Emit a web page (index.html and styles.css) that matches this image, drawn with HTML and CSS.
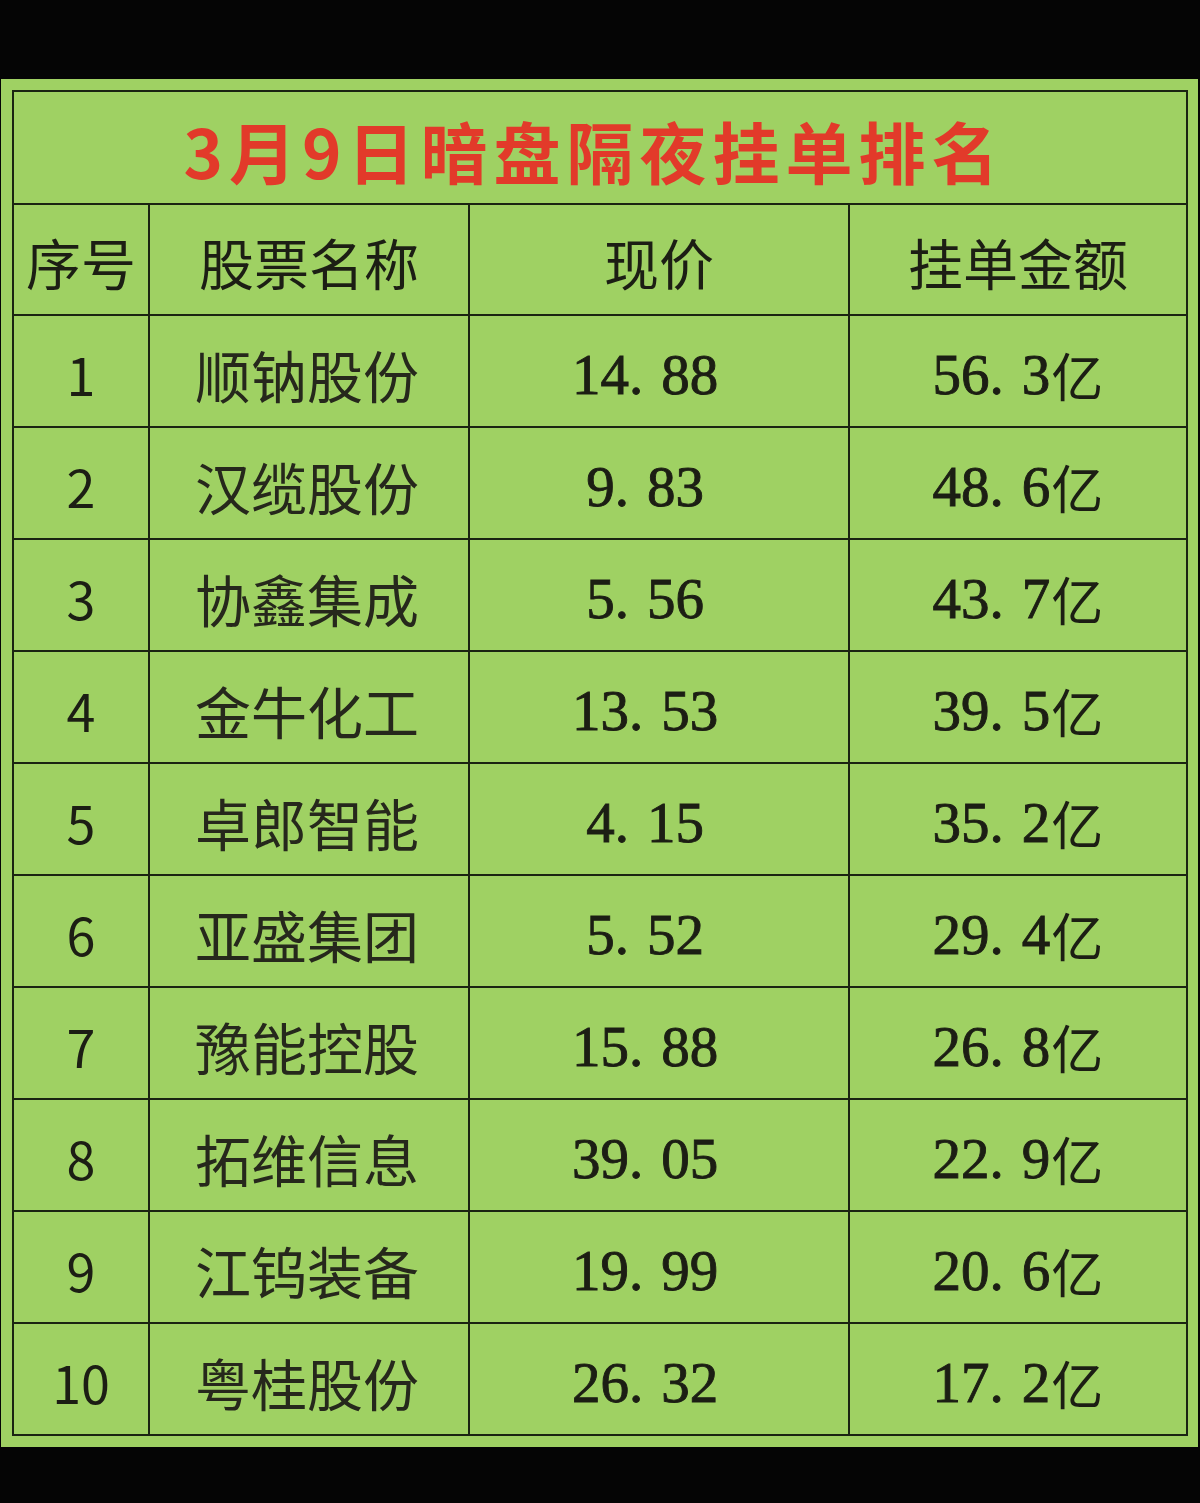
FILE: index.html
```html
<!DOCTYPE html>
<html lang="zh-CN">
<head>
<meta charset="utf-8">
<title>3月9日暗盘隔夜挂单排名</title>
<link rel="stylesheet" href="styles.css">
</head>
<body>
<div class="sheet">
  <div class="grid">
    <div class="title">3月9日暗盘隔夜挂单排名</div>
    <div class="head">序号</div>
    <div class="head">股票名称</div>
    <div class="head">现价</div>
    <div class="head">挂单金额</div>

    <div class="no">1</div><div class="name">顺钠股份</div><div class="num price">14<span class="dot">.</span>88</div><div class="num amt">56<span class="dot">.</span>3<span class="yi">亿</span></div>
    <div class="no">2</div><div class="name">汉缆股份</div><div class="num price">9<span class="dot">.</span>83</div><div class="num amt">48<span class="dot">.</span>6<span class="yi">亿</span></div>
    <div class="no">3</div><div class="name">协鑫集成</div><div class="num price">5<span class="dot">.</span>56</div><div class="num amt">43<span class="dot">.</span>7<span class="yi">亿</span></div>
    <div class="no">4</div><div class="name">金牛化工</div><div class="num price">13<span class="dot">.</span>53</div><div class="num amt">39<span class="dot">.</span>5<span class="yi">亿</span></div>
    <div class="no">5</div><div class="name">卓郎智能</div><div class="num price">4<span class="dot">.</span>15</div><div class="num amt">35<span class="dot">.</span>2<span class="yi">亿</span></div>
    <div class="no">6</div><div class="name">亚盛集团</div><div class="num price">5<span class="dot">.</span>52</div><div class="num amt">29<span class="dot">.</span>4<span class="yi">亿</span></div>
    <div class="no">7</div><div class="name">豫能控股</div><div class="num price">15<span class="dot">.</span>88</div><div class="num amt">26<span class="dot">.</span>8<span class="yi">亿</span></div>
    <div class="no">8</div><div class="name">拓维信息</div><div class="num price">39<span class="dot">.</span>05</div><div class="num amt">22<span class="dot">.</span>9<span class="yi">亿</span></div>
    <div class="no">9</div><div class="name">江钨装备</div><div class="num price">19<span class="dot">.</span>99</div><div class="num amt">20<span class="dot">.</span>6<span class="yi">亿</span></div>
    <div class="no">10</div><div class="name">粤桂股份</div><div class="num price">26<span class="dot">.</span>32</div><div class="num amt">17<span class="dot">.</span>2<span class="yi">亿</span></div>
  </div>
</div>
</body>
</html>
```

FILE: styles.css
```css
html, body {
  margin: 0;
  padding: 0;
  background: #050505;
}
body {
  width: 1200px;
  height: 1503px;
  overflow: hidden;
  padding-top: 79px;
  box-sizing: border-box;
}
.sheet {
  margin-left: 1px;
  width: 1197px;
  height: 1368px;
  box-sizing: border-box;
  padding: 11px 0 0 11px;
  background: #9fd163;
}
.grid {
  display: grid;
  width: 1176px;
  box-sizing: border-box;
  grid-template-columns: 134px 318px 378px 336px;
  grid-template-rows: 111px 109px repeat(10, 110px);
  gap: 2px;
  padding: 2px;
  background: #1a2412;
}
.grid > div {
  background: #9fd163;
  display: flex;
  align-items: center;
  justify-content: center;
  color: #1c1e14;
}
.title {
  grid-column: 1 / 5;
  font-family: "Noto Sans CJK SC", "Noto Sans", sans-serif;
  font-weight: 700;
  font-size: 67px;
  letter-spacing: 6px;
  color: #e23a2a !important;
  padding-top: 4px;
  padding-right: 12px;
}
.head {
  font-family: "Noto Sans CJK SC", sans-serif;
  font-weight: 400;
  font-size: 55px;
  padding-top: 2px;
}
.no {
  font-family: "Noto Sans CJK SC", sans-serif;
  font-size: 52px;
  padding-top: 4px;
}
.name {
  font-family: "Noto Sans CJK SC", sans-serif;
  font-size: 56px;
  color: #26281c !important;
  padding-top: 4px;
  padding-right: 4px;
}
.num {
  font-family: "Liberation Serif", "Times New Roman", serif;
  font-size: 57px;
  -webkit-text-stroke: 0.9px #1c1e14;
  padding-top: 6px;
}
.price {
  padding-right: 28px;
}
.dot {
  margin-right: 18px;
}
.yi {
  font-family: "Noto Sans CJK SC", sans-serif;
  font-size: 52px;
  -webkit-text-stroke: 0;
  margin-left: 1px;
}
```
